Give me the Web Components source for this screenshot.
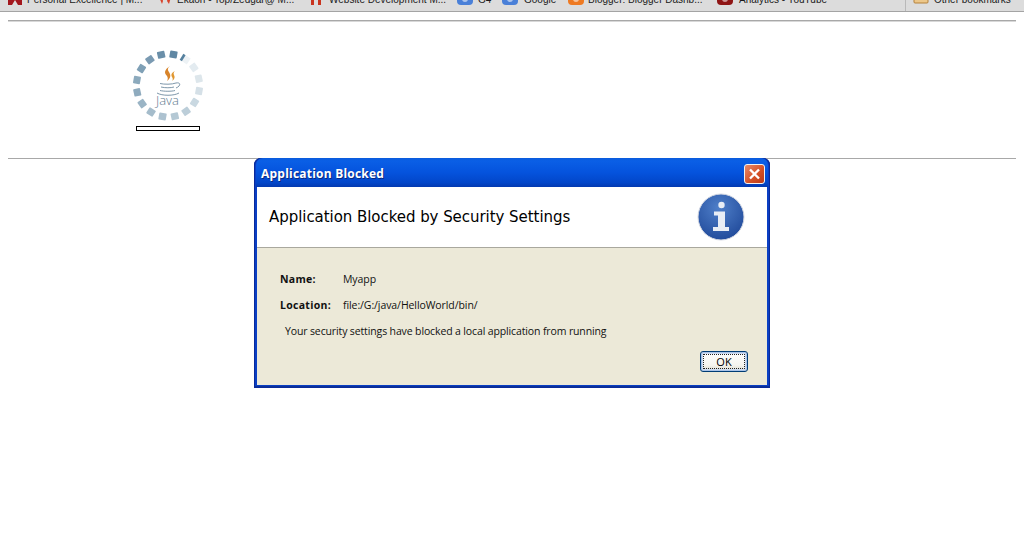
<!DOCTYPE html>
<html><head><meta charset="utf-8"><style>
html,body{margin:0;padding:0;background:#fff;height:538px;overflow:hidden;font-family:"Liberation Sans",sans-serif}
</style></head><body>
<bookmark-bar>
<bm-item style="margin-left:7px;width:150px;--g:4px" color="#a3171d" shape="star">Personal Excellence | M...</bm-item>
<bm-item style="width:151px;--g:4px" color="#d8432a" shape="gmail">Ekaon - Top/Zedgar@ M...</bm-item>
<bm-item style="width:149px;--g:5px" color="#c9341f" shape="bars">Website Development M...</bm-item>
<bm-item style="width:45px;--g:5px" color="#4a80d8" shape="round">G4</bm-item>
<bm-item style="width:66px;--g:6px" color="#4a80d8" shape="round">Google</bm-item>
<bm-item style="width:149px;--g:4px" color="#ee7a22" shape="round">Blogger: Blogger Dashb...</bm-item>
<bm-item style="width:188px;--g:6px" color="#8f1515" shape="round">Analytics - YouTube</bm-item>
<bm-sep></bm-sep>
<bm-item style="margin-left:7px;width:106px;--g:5px" color="#ecc78a" shape="folder">Other bookmarks</bm-item>
</bookmark-bar>
<applet-area>
  <java-loader></java-loader>
</applet-area>
<security-dialog>
  <span slot="title">Application Blocked</span>
  <span slot="heading">Application Blocked by Security Settings</span>
  <info-row label="Name:">Myapp</info-row>
  <info-row label="Location:">file:/G:/java/HelloWorld/bin/</info-row>
  <span slot="message">Your security settings have blocked a local application from running</span>
</security-dialog>
<script>
function def(name, html, init){
  customElements.define(name, class extends HTMLElement{
    constructor(){super();this.attachShadow({mode:'open'}).innerHTML=typeof html==='function'?html(this):html;}
    connectedCallback(){ if(init) init(this); }
  });
}
def('bookmark-bar',`<style>
:host{display:flex;align-items:flex-end;height:12px;box-sizing:border-box;background:#dcdcdc;border-bottom:1px solid #a4a4a4;overflow:hidden;font:10px "Liberation Sans",sans-serif;color:#1a1a1a;white-space:nowrap}
</style><slot></slot>`);
def('bm-sep',`<style>:host{display:block;width:1px;height:11px;background:#b9b9b9;flex:none}</style>`);
def('bm-item',`<style>
:host{display:flex;flex:none;align-items:flex-end;gap:var(--g,5px);height:11px;overflow:visible;white-space:nowrap}
svg{flex:none;display:block;margin-bottom:6px}
span{display:block;margin-bottom:5px;line-height:12px}
</style><svg id="i" width="16" height="8" viewBox="0 0 16 8"></svg><span><slot></slot></span>`,el=>{
  const c=el.getAttribute('color'),s=el.getAttribute('shape'),g=el.shadowRoot.getElementById('i');
  g.innerHTML={
    star:`<path d="M1 0h14v8h-4L8 3 5 8H1z" fill="${c}"/>`,
    gmail:`<path d="M2 0h3l1 4-1 3zM11 0h3l-2 7-2-3z" fill="${c}"/>`,
    bars:`<rect x="3" width="3" height="8" fill="${c}"/><rect x="10" width="3" height="8" fill="${c}"/>`,
    round:`<path d="M0 0h16v4a4 4 0 0 1-4 4H4a4 4 0 0 1-4-4z" fill="${c}"/><path d="M5 0v2a3 3 0 0 0 6 0V0" fill="#fff" opacity=".55"/>`,
    folder:`<path d="M1 0h14v5a1 1 0 0 1-1 1H2a1 1 0 0 1-1-1z" fill="${c}" stroke="#b5813a"/>`
  }[s];
});
def('applet-area',`<style>
:host{display:block;box-sizing:border-box;margin:8px 8px 0;height:139px;border-top:1px solid #a8a8a8;border-bottom:1px solid #a8a8a8;padding:29px 0 0 124px;box-shadow:inset 0 1px 0 #d8d8d8}
</style><slot></slot>`);
def('java-loader',()=>{
  const segs=[[10,'#5f87a3'],[55,'#e3ebf0'],[77.5,'#dde6eb'],[100,'#d5e0e7'],[122.5,'#c9d8e1'],[145,'#bcced9'],[167.5,'#b4c8d4'],[190,'#adc2d0'],[212.5,'#a5bccb'],[235,'#9ab4c5'],[257.5,'#8fabbe'],[280,'#8caabd'],[302.5,'#7fa0b6'],[325,'#7a9ab2'],[347.5,'#6a8fa9']];
  let seg=segs.map(([a,c])=>`<rect x="-3.75" y="-35" width="7.5" height="7" rx=".8" fill="${c}" transform="translate(36 35.5) rotate(${a})"/>`).join('');
  seg+=`<rect x="-3.75" y="-35" width="7.5" height="7" fill="#edf2f5" transform="translate(36 35.5) rotate(34)"/><rect x="-3.75" y="-35" width="2.6" height="7" fill="#55809e" transform="translate(36 35.5) rotate(32)"/>`;
  return `<style>
:host{display:block;width:72px}
svg{display:block}
.bar{box-sizing:border-box;width:64px;height:5px;margin:4px 0 0 4px;border:1px solid #000;background:#fff}
text{font:300 13.500px "Open Sans","Liberation Sans",sans-serif;fill:#5f7b8f}
</style>
<svg width="72" height="72" viewBox="0 0 72 72">
<g style="filter:blur(.35px)">${seg}</g>
<path d="M38 16c-6 4-6 7-3 10 1 2 1 3 0 5 4-3 4-6 2-9-2-3-1-4 1-6z" fill="#d8842a"/>
<path d="M43 21c-4 2-4 4-3 6 1 1 1 3 0 4 3-2 3-4 2-6-1-2 0-3 1-4z" fill="#e0962f"/>
<g fill="none" stroke="#6f8ba0" stroke-width=".9">
<path d="M28 33.500c4 1 12 1 16-.5"/>
<path d="M44 33c5-1 5 3 0 5"/>
<path d="M29 37c4 1 10 1 13 0"/>
<path d="M28 40.500c4 1 12 1 15 0"/>
<path d="M25 43c5 3 17 3 22 0"/>
</g>
<text x="24" y="55" textLength="23" lengthAdjust="spacingAndGlyphs">Java</text>
</svg><div class="bar"></div>`;
});
def('info-row',el=>`<style>
:host{display:flex;height:26px;align-items:center;font:10.5px/13px "Open Sans","Liberation Sans",sans-serif;color:#111;letter-spacing:-.08px}
b{width:63px;flex:none;font-weight:700;font-size:10.5px;letter-spacing:.3px}
</style><b>${el.getAttribute('label')}</b><span><slot></slot></span>`);
def('security-dialog',`<style>
:host{position:absolute;left:254px;top:158px;width:516px;height:230px;box-sizing:border-box;display:flex;flex-direction:column;background:#0a3fc4;border-radius:7px 7px 0 0;padding:0 3px 3px;box-shadow:inset 0 0 0 1px #0a2a9a,inset 0 -1px 0 1px #0a3098}
.title{flex:none;height:29px;display:flex;align-items:center;justify-content:space-between;padding:2px 3px 0 5px;margin:0 -1px;box-sizing:border-box;background:linear-gradient(#0a5bdc 0,#0a5fe6 10%,#0553dd 50%,#0246c9 85%,#0339b0 100%);border-radius:7px 7px 0 0;color:#fff;font:bold 12px "Open Sans","Liberation Sans",sans-serif;letter-spacing:.22px;text-shadow:1px 1px 0 #0a2a80}
.close{width:21px;height:20px;box-sizing:border-box;border:1px solid #f2f2f2;border-radius:3px;background:linear-gradient(135deg,#e88a6a,#d44f24 60%,#b93a1a);flex:none;display:block}
.close svg{display:block}
.head{flex:none;height:61px;background:#fff;display:flex;align-items:center;justify-content:space-between;padding:0 22px 1px 12px;box-sizing:border-box;border-bottom:1px solid #a9a89e;font:15px "DejaVu Sans",sans-serif;color:#000}
.head span{display:block;letter-spacing:-.05px}
.body{flex:1;background:#ece9d8;padding:18px 19px 0 23px;display:flex;flex-direction:column}
.msg{display:block;font:10.5px/13px "Open Sans","Liberation Sans",sans-serif;letter-spacing:-.13px;color:#111;margin:0 0 0 5px;padding-top:7px}
.foot{margin-top:auto;display:flex;justify-content:flex-end;padding-bottom:13px}
button{width:48px;height:21px;padding:0;box-sizing:border-box;border:1px solid #003c74;border-radius:3px;background:linear-gradient(#fff,#f5f4ee 70%,#dcd8cb);font:11px "Open Sans","Liberation Sans",sans-serif;color:#000;box-shadow:inset 0 0 0 1px #a9c3e8,inset 0 0 0 2px #cfdcef;outline:1px dotted #222;outline-offset:-4px}
</style>
<div class="title"><slot name="title"></slot><span class="close"><svg width="19" height="18" viewBox="0 0 19 18"><path d="M5 4.500l9 9M14 4.500l-9 9" stroke="#fff" stroke-width="2.4"/></svg></span></div>
<div class="head"><span><slot name="heading"></slot></span>
<svg width="48" height="48" viewBox="0 0 48 48">
<defs><radialGradient id="g" cx=".45" cy=".3" r=".8"><stop offset="0" stop-color="#4f7fc9"/><stop offset="1" stop-color="#1c4596"/></radialGradient></defs>
<circle cx="24" cy="24" r="23" fill="url(#g)" stroke="#d5d9e3"/>
<circle cx="24.500" cy="12" r="3.200" fill="#e8edf5"/>
<path d="M17 18.500h11v15.500h4v4H16v-4h5V22.500h-4z" fill="#e8edf5"/>
</svg></div>
<div class="body"><slot></slot><div class="msg"><slot name="message"></slot></div>
<div class="foot"><button>OK</button></div></div>`);
</script>
</body></html>
